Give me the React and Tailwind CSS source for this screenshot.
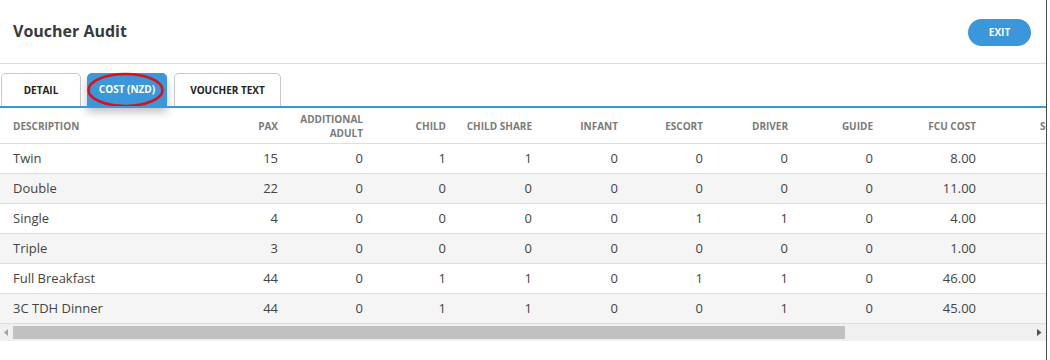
import React from "react";

const cols = [
  { key: "desc", label: "DESCRIPTION", w: 205, align: "left" },
  { key: "pax", label: "PAX", w: 85 },
  { key: "add", label: ["ADDITIONAL", "ADULT"], w: 85 },
  { key: "child", label: "CHILD", w: 83 },
  { key: "share", label: "CHILD SHARE", w: 86 },
  { key: "inf", label: "INFANT", w: 86 },
  { key: "esc", label: "ESCORT", w: 85 },
  { key: "drv", label: "DRIVER", w: 85 },
  { key: "gde", label: "GUIDE", w: 85 },
  { key: "fcu", label: "FCU COST", w: 103 },
  { key: "sc", label: "SCOST", w: 110, align: "left", pad: 52 },
];

const rows = [
  ["Twin", 15, 0, 1, 1, 0, 0, 0, 0, "8.00", ""],
  ["Double", 22, 0, 0, 0, 0, 0, 0, 0, "11.00", ""],
  ["Single", 4, 0, 0, 0, 0, 1, 1, 0, "4.00", ""],
  ["Triple", 3, 0, 0, 0, 0, 0, 0, 0, "1.00", ""],
  ["Full Breakfast", 44, 0, 1, 1, 0, 1, 1, 0, "46.00", ""],
  ["3C TDH Dinner", 44, 0, 1, 1, 0, 0, 1, 0, "45.00", ""],
];

export default function App() {
  return (
    <div
      className="w-[1050px] h-[360px] bg-white flex overflow-hidden"
      style={{ fontFamily: '"Open Sans", "Liberation Sans", sans-serif' }}
    >
      <div className="w-[1046px] h-full bg-white rounded-tr-[7px] flex flex-col overflow-hidden">
        {/* Header */}
        <div className="h-[64px] flex items-center justify-between pl-[13px] pr-[15px] border-b border-[#dcdcec] shrink-0">
          <div className="text-[16px] font-bold text-[#3a3a3a] pb-[1px]">Voucher Audit</div>
          <button className="w-[63px] h-[27px] rounded-full bg-[#3a97da] text-white text-[10px] font-bold flex items-center justify-center mt-[1px]">
            EXIT
          </button>
        </div>

        {/* Tabs */}
        <div className="mt-[9px] h-[33px] flex items-end pl-[1px] gap-0 shrink-0 relative">
          <div className="w-[80px] h-[33px] border border-b-0 border-[#c8c8c8] rounded-t-[5px] flex items-center justify-center text-[10px] font-bold text-[#222]">
            DETAIL
          </div>
          <div className="ml-[6px] w-[80px] h-[33px] relative rounded-t-[5px] bg-[#3a97da] flex items-center justify-center text-[10px] font-bold text-white shadow-[0_6px_8px_rgba(0,0,0,0.25)] z-10">
            COST (NZD)
            <svg className="absolute left-[0px] top-[0px] overflow-visible" width="78" height="34" viewBox="0 0 78 34">
              <ellipse cx="38.5" cy="17" rx="37" ry="16" fill="none" stroke="#dc1018" strokeWidth="2.6" />
            </svg>
          </div>
          <div className="ml-[7px] w-[107px] h-[33px] border border-b-0 border-[#c8c8c8] rounded-t-[5px] flex items-center justify-center text-[10px] font-bold text-[#222]">
            VOUCHER TEXT
          </div>
        </div>
        <div className="h-[2px] bg-[#3a97da] shrink-0 relative z-20" />

        {/* Table */}
        <div className="overflow-hidden shrink-0">
          <table className="border-collapse table-fixed" style={{ width: cols.reduce((a, c) => a + c.w, 0) }}>
            <colgroup>
              {cols.map((c) => (
                <col key={c.key} style={{ width: c.w }} />
              ))}
            </colgroup>
            <thead>
              <tr className="h-[35px] border-b border-[#dedede]">
                {cols.map((c, i) => (
                  <th
                    key={c.key}
                    className={`text-[10px] font-bold text-[#7a7a7a] leading-[14px] whitespace-nowrap pt-[2px] ${
                      c.align === "left" ? "text-left" : "text-right"
                    } ${i === 0 ? "pl-[13px]" : "pr-[12px]"}`}
                    style={c.pad ? { paddingLeft: c.pad } : undefined}
                  >
                    {Array.isArray(c.label) ? (
                      <>
                        {c.label[0]}
                        <br />
                        {c.label[1]}
                      </>
                    ) : (
                      c.label
                    )}
                  </th>
                ))}
              </tr>
            </thead>
            <tbody>
              {rows.map((r, ri) => (
                <tr key={ri} className={`h-[30px] border-b border-[#dedede] ${ri % 2 === 1 ? "bg-[#f5f5f5]" : "bg-white"}`}>
                  {r.map((v, ci) => (
                    <td
                      key={ci}
                      className={`text-[13px] text-[#444] whitespace-nowrap pt-[1px] ${
                        ci === 0 ? "text-left pl-[13px]" : "text-right pr-[12px]"
                      }`}
                    >
                      {v}
                    </td>
                  ))}
                </tr>
              ))}
            </tbody>
          </table>
        </div>

        {/* Fake horizontal scrollbar */}
        <div className="h-[17px] bg-[#f0f0f0] flex items-center shrink-0">
          <div className="w-[13px] h-full flex items-center justify-center">
            <svg width="5" height="7" viewBox="0 0 5 7">
              <path d="M4 0 L0 3.5 L4 7 Z" fill="#a3a3a3" />
            </svg>
          </div>
          <div className="w-[832px] h-[13px] bg-[#c1c1c1]" />
          <div className="flex-1" />
          <div className="w-[14px] h-full flex items-center justify-center">
            <svg width="5" height="7" viewBox="0 0 5 7">
              <path d="M0 0 L4.5 3.5 L0 7 Z" fill="#505050" />
            </svg>
          </div>
        </div>
      </div>
      <div className="w-[1px] h-full bg-[#4a4a4a]" />
      <div className="flex-1 bg-white" />
    </div>
  );
}
